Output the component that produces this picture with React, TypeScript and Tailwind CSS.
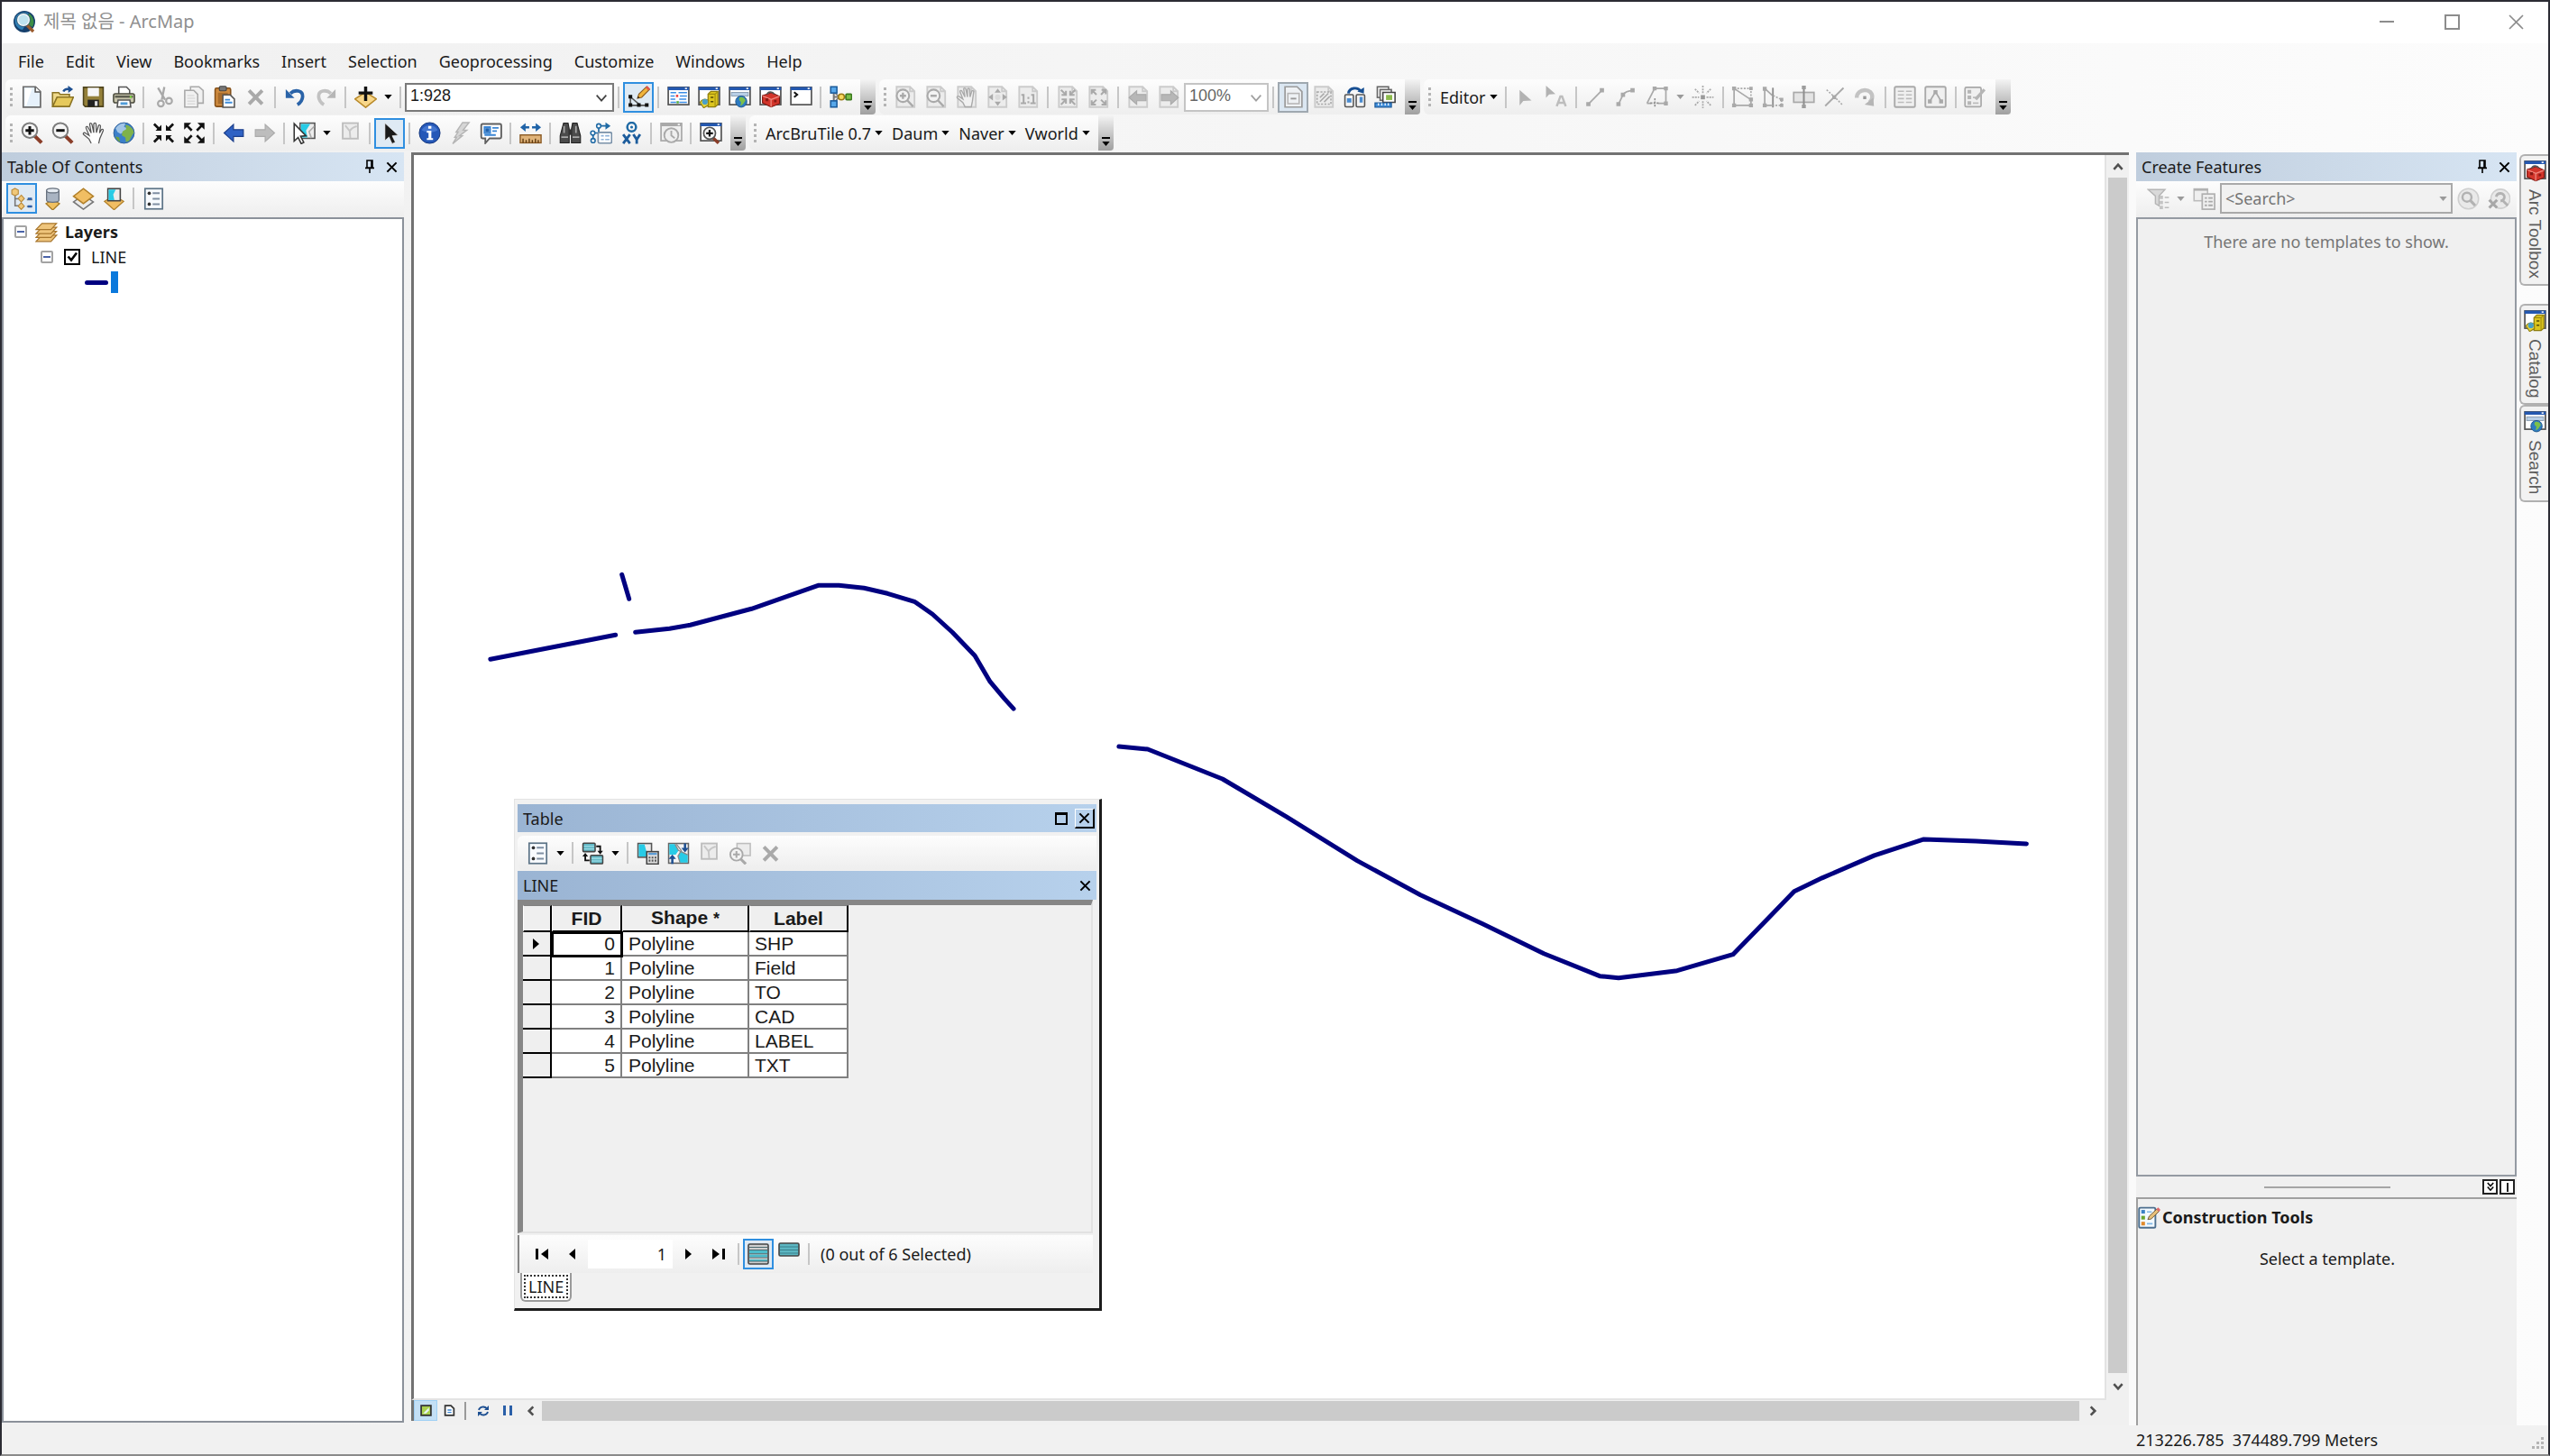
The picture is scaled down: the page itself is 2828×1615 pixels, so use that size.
import React from "react";

type Kids = { children?: React.ReactNode };

const G = "#a9a9a9";
const GL = "#dcdcdc";
const NAVY = "#1d4f91";

/* ---------- icon primitives, drawn on a 16 unit grid ---------- */

function Svg({ children }: Kids) {
  return (
    <svg viewBox="0 0 16 16" className="h-[25px] w-[25px] shrink-0" fill="none" aria-hidden="true">
      {children}
    </svg>
  );
}

const winFrame = (gray = false) => (
  <>
    <rect x="0.7" y="1.2" width="14.6" height="12.3" fill={gray ? "#efefef" : "#fff"} stroke={gray ? G : "#555"} strokeWidth="1.1" />
    <rect x="0.5" y="1" width="15" height="2.2" fill={gray ? G : "#2458b0"} />
    <rect x="12.6" y="1.5" width="1.4" height="1" fill="#fff" />
  </>
);

const grayPage = (
  <path d="M1.5 .8h9.5l3.2 3.2v11.2H1.5z M11 .8V4h3.2" fill="#ececec" stroke="#cbcbcb" strokeWidth="1.2" />
);

const icons = {
  newDoc: (
    <>
      <path d="M1.8.8h8.7L14 4.3v11H1.8z" fill="#e6f1fb" stroke="#6b6b6b" strokeWidth="1.1" />
      <path d="M3 2h5l-4 12H3z" fill="#fff" />
      <path d="M10.3.9v3.6H14" fill="#fff" stroke="#555" />
    </>
  ),
  open: (
    <>
      <path d="M.8 14.5V5h4.4l1 1.2h6.6v2" fill="#efd98a" stroke="#8b7424" />
      <path d="M.9 14.8 4 8.2h11.6l-2.8 6.6z" fill="#e6c95c" stroke="#8b7424" />
      <path d="M8.5 4.2c.8-1.8 2.2-2 4-1.7" stroke={NAVY} strokeWidth="1.5" />
      <path d="m11.8 0 3.6 2.6-3.4 2.5z" fill={NAVY} />
    </>
  ),
  save: (
    <>
      <path d="M1 1.2h14v13.6H2.2L1 13.6z" fill="#94803a" stroke="#4e431c" />
      <rect x="4" y="1.5" width="8" height="6" fill="#f6f6f6" />
      <rect x="4" y="10" width="8" height="5" fill="#222" />
      <rect x="9" y="11" width="2" height="3.4" fill="#ddd" />
    </>
  ),
  print: (
    <>
      <path d="M4.3 6V1h5.5l2.2 2.2V6" fill="#fff" stroke="#555" />
      <rect x=".6" y="5.8" width="14.8" height="6.4" rx="1.3" fill="#c8c5ac" stroke="#4a4a3c" />
      <rect x="1.6" y="7" width="12.8" height="1.6" fill="#5d5d50" />
      <path d="M3.8 10.2h8.4l.6 4.9H3.2z" fill="#fff" stroke="#555" />
      <rect x="5.5" y="11.8" width="5" height="1.8" fill="#4f9bd8" />
      <circle cx="12.8" cy="8" r=".8" fill="#7be03a" />
    </>
  ),
  cut: (
    <>
      <path d="M4 1.5 9 10M8.5 1l-1.8 9" stroke={G} strokeWidth="1.5" />
      <circle cx="6" cy="12.7" r="2.1" stroke={G} strokeWidth="1.4" />
      <circle cx="11.8" cy="10.8" r="2.1" stroke={G} strokeWidth="1.4" />
    </>
  ),
  copy: (
    <>
      <path d="M5.3.8h6l3 2.6v9H5.3z" fill="#f1f1f1" stroke={G} />
      <path d="M1.2 3.4h6.4l2.8 2.8v9H1.2z" fill="#f1f1f1" stroke={G} />
      <path d="M3 7h5M3 9h5.6M3 11h5.6M3 13h5.6" stroke={GL} />
    </>
  ),
  paste: (
    <>
      <rect x="1" y="1.8" width="11" height="13" rx="1" fill="#cf8b3f" stroke="#855018" />
      <rect x="4" y=".5" width="5" height="3.2" rx=".8" fill="#777" stroke="#444" strokeWidth=".7" />
      <path d="M3 5h7v8H3z" fill="#a86c2c" />
      <path d="M6.5 6.5h5.2l3 3v5.8H6.5z" fill="#fff" stroke="#555" />
      <path d="M8 10h3.6M8 12h5.2" stroke="#3e8ddb" strokeWidth="1.2" />
    </>
  ),
  del: <path d="m3.3 3.5 9.4 9.5M12.7 3.5 3.3 13" stroke={G} strokeWidth="2.5" />,
  undo: (
    <>
      <path d="M4.5 5.5C8 2.3 13.5 3.6 13.2 7.8c-.2 3-2 4.7-3.7 5.7" stroke="#2a63a8" strokeWidth="2.4" />
      <path d="M1.2 2.6v6.2h6.2z" fill="#2a63a8" />
    </>
  ),
  redo: (
    <>
      <path d="M11.5 5.5C8 2.3 2.5 3.6 2.8 7.8c.2 3 2 4.7 3.7 5.7" stroke="#c2c2c2" strokeWidth="2.4" />
      <path d="M14.8 2.6v6.2H8.6z" fill="#b6b6b6" />
    </>
  ),
  addData: (
    <>
      <path d="m8 15.5-7.6-6L8 4.6l7.6 4.9z" fill="#f8d78a" stroke="#b98a2b" />
      <path d="M8 .6v10.2M3 5.2h10" stroke="#111" strokeWidth="2.2" />
    </>
  ),
  sketch: (
    <>
      <path d="M2 8v6h12M2 8l6 5" stroke="#555" />
      <path d="M.7 6.5h2.6v2.6H.7zM.7 12.4h2.6V15H.7zM6.7 12.4h2.6V15H6.7zM12.3 12.4h2.6V15h-2.6z" fill="#111" />
      <path d="m7 9 1-3 5.6-5.4 2 2L10 8.3z" fill="#f0b43c" stroke="#8a5a1e" strokeWidth=".7" />
      <path d="m12.7 1.4 1.3-1.2 2 2-1.3 1.2z" fill="#e0574f" />
      <path d="m7 9 .5-1.5 1 1z" fill="#111" />
    </>
  ),
  toc: (
    <>
      {winFrame()}
      <path d="M2.3 5h4M2.3 7.4h3M2.3 9.6h3.4M2.3 11.8h4M8 5h6M9 7.4h5M8.5 9.6h5M8.5 11.8h5.4" stroke="#3c8ee6" strokeWidth="1" />
      <path d="M6.2 6.5h1.6v1.6H6.2z" fill="#e33" />
      <path d="M6.6 11h1.6v1.6H6.6z" fill="#4aa83a" />
    </>
  ),
  catalog: (
    <>
      {winFrame()}
      <path d="m7.2 6 2-2h5v9.4l-2 1.7h-5z" fill="#dcc51e" stroke="#8d7c0c" strokeWidth=".8" />
      <path d="M7.5 6h4.7v8.7M12.2 6l1.9-1.8" stroke="#a08d10" strokeWidth=".7" />
      <path d="M1.5 12c1-2.4 4-3 6-1.4v3.2l-3.4 2z" fill="#e7d33a" stroke="#8d7c0c" strokeWidth=".7" />
      <circle cx="5" cy="11.5" r="2" fill="#4aa0c8" />
      <path d="M9 8.3h2M9 11.3h2" stroke="#554a05" />
    </>
  ),
  search: (
    <>
      {winFrame()}
      <rect x="2" y="4.8" width="12" height="2.6" fill="#b9cfe6" stroke="#8a9cb0" strokeWidth=".6" />
      <circle cx="9" cy="11.3" r="4" fill="#2d7bc2" stroke="#1c5488" strokeWidth=".6" />
      <path d="M7.8 8.4c1.6-.7 4 .2 4.2 2.2l-1.6 2.4-1.8 1.4c-.4-1.3.8-1.8 0-3-.8-.8-1.6-1.6-.8-3z" fill="#7cc04a" />
    </>
  ),
  toolbox: (
    <>
      {winFrame()}
      <path d="m2.3 7 6.5-2 5.6 2.6v5.2L8.4 15.2l-6.1-3z" fill="#d3352b" stroke="#7e1610" strokeWidth=".7" />
      <path d="M8.5 9.8 2.3 7.2M8.5 9.8l5.9-2.2M8.4 9.8v5.4" stroke="#f08a80" strokeWidth=".8" />
      <path d="M5.6 6.2C6 4.2 9.5 3.8 10.6 6" stroke="#555" strokeWidth="1.1" />
      <path d="M4.5 9h2v2h-2zM10.5 10h1.8v1.8h-1.8z" fill="#8a1a14" />
    </>
  ),
  python: (
    <>
      {winFrame()}
      <path d="m3 4.6 2.2 1.8L3 8.2" stroke="#111" strokeWidth="1.3" />
    </>
  ),
  model: (
    <>
      <path d="M3 3.5v9M3 8h11" stroke="#777" strokeWidth="1.3" />
      <path d="M3 4.5 7 8l-4 4" stroke="#777" />
      <rect x=".8" y=".8" width="4.4" height="4.4" fill="#58a8ea" stroke="#1c5c9c" />
      <rect x=".8" y="10.8" width="4.4" height="4.4" fill="#58a8ea" stroke="#1c5c9c" />
      <circle cx="8.4" cy="8" r="2.1" fill="#f8d860" stroke="#9b7a14" />
      <rect x="11.6" y="6" width="4" height="4" rx=".6" fill="#7cc04a" stroke="#3b7a1e" />
    </>
  ),
  pgZoomIn: (
    <>
      {grayPage}
      <circle cx="6" cy="7.2" r="4.4" fill="#f3f3f3" stroke={G} strokeWidth="1.3" />
      <path d="M6 5v4.4M3.8 7.2h4.4M9.2 10.6l4 4.2" stroke={G} strokeWidth="1.5" />
    </>
  ),
  pgZoomOut: (
    <>
      {grayPage}
      <circle cx="6" cy="7.2" r="4.4" fill="#f3f3f3" stroke={G} strokeWidth="1.3" />
      <path d="M3.8 7.2h4.4M9.2 10.6l4 4.2" stroke={G} strokeWidth="1.5" />
    </>
  ),
  pgPan: (
    <>
      {grayPage}
      <path d="M6.5 15 5 12 1 8.6c-.5-1 .7-1.4 1.5-.8L5 9.5 3 4.4c-.2-1 1-1.3 1.4-.4L6.5 8 5.6 2.4c0-1 1.2-1 1.5 0L8.3 8V2.6c.2-.9 1.4-.9 1.5 0l.3 5.4 1.2-4c.5-.8 1.5-.4 1.4.5L11.8 11 11 15z" fill="#f1f1f1" stroke={G} strokeWidth=".9" />
    </>
  ),
  pgFull: (
    <>
      {grayPage}
      <path d="M8 2 5.8 5h4.4zM8 14.4 5.8 11.4h4.4zM1.4 8.2l3.2-2.4v4.8zM14.6 8.2l-3.2-2.4v4.8z" fill={G} />
      <circle cx="8" cy="8.2" r="2" fill={GL} />
    </>
  ),
  pg11: (
    <>
      {grayPage}
      <path d="M3 6.5h1.6v6M2.6 12.5h3.8M10 6.5h1.6v6M9.4 12.5h3.8M8 8v1.4M8 11v1.4" stroke={G} strokeWidth="1.3" />
    </>
  ),
  pgIn: (
    <>
      {grayPage}
      <path d="m3 3 3 3M6.5 3.6v3H3.4M13 3l-3 3M9.5 3.6v3h3.1M3 13.4l3-3M6.5 12.8v-3H3.4M13 13.4l-3-3M9.5 12.8v-3h3.1" stroke={G} strokeWidth="1.3" />
    </>
  ),
  pgOut: (
    <>
      {grayPage}
      <path d="m3.4 3.4 3 3M3 6V3h3M12.6 3.4l-3 3M13 6V3h-3M3.4 13l3-3M3 10.4v3h3M12.6 13l-3-3M13 10.4v3h-3" stroke={G} strokeWidth="1.3" />
    </>
  ),
  pgBack: (
    <>
      {grayPage}
      <path d="m1.4 8.5 5.4-4.8v2.6h6.6v4.4H6.8v2.6z" fill="#b7b7b7" stroke={G} strokeWidth=".7" />
    </>
  ),
  pgFwd: (
    <>
      {grayPage}
      <path d="M14.6 8.5 9.2 3.7v2.6H2.6v4.4h6.6v2.6z" fill="#b7b7b7" stroke={G} strokeWidth=".7" />
    </>
  ),
  draft: (
    <>
      <path d="M2 .8h8.6L14 4.2v11H2z" fill="#eef1f4" stroke="#9b9b9b" strokeWidth="1.1" />
      <rect x="4" y="5.5" width="8" height="7.3" stroke="#b5b5b5" />
      <path d="M6 9.2h4" stroke="#999" strokeWidth="1.2" />
    </>
  ),
  focus: (
    <>
      {grayPage}
      <rect x="3" y="4.5" width="9.8" height="8.6" stroke={G} strokeDasharray="1.4 1" />
      <path d="m5 11.4 6-6M5 8.5l3-3M8 11.6l4-4" stroke={G} />
    </>
  ),
  changeLayout: (
    <>
      <path d="M3.5 5.5C4 1.5 10 .5 12.2 4" stroke="#174f93" strokeWidth="1.9" />
      <path d="m9.8 4.2 4.6 1.4.2-4.4z" fill="#174f93" />
      <rect x="1" y="6.4" width="6" height="8.6" rx=".8" fill="#f4f4f4" stroke="#555" />
      <rect x="9" y="6.4" width="6" height="8.6" rx=".8" fill="#f4f4f4" stroke="#555" />
      <path d="M2.4 9h3.2v3H2.4zM11.4 8h2.2v4h-2.2z" fill="#4a8bd0" />
    </>
  ),
  dataDriven: (
    <>
      <rect x="2.2" y=".8" width="8" height="7.6" fill="#f2f2f2" stroke="#666" />
      <rect x="4.2" y="2.8" width="8" height="7.6" fill="#f2f2f2" stroke="#666" />
      <path d="M6.2 4.8h8.6v7H6.2z" fill="#fff" stroke="#444" />
      <rect x="8.4" y="6.6" width="4.4" height="3.6" fill="#8cba4c" />
      <path d="M.6 12.2h11.6v3H.6z" fill="#3f8edb" stroke="#1e5b9a" strokeWidth=".8" />
      <path d="M3 12.4v1.6M5.4 12.4v1.6M7.8 12.4v1.6M10 12.4v1.6" stroke="#fff" strokeWidth=".8" />
    </>
  ),
  edArrow: <path d="M4 3v11l2.600-3.200 5.900-.300z" fill="#b2b2b2" />,
  edArrowA: (
    <>
      <path d="M1 0v8.6l2.2-2.4 4.5-.3z" fill="#b2b2b2" />
      <path d="m8.6 14.6 2.6-7h1.2l2.6 7M9.8 12.2h4" stroke="#bdbdbd" strokeWidth="1.6" />
    </>
  ),
  edLine: (
    <>
      <path d="m3 13 9.4-9.6" stroke={G} strokeWidth="1.1" />
      <path d="M1.4 11.6h3v3h-3zM11 1.8h3v3h-3z" fill={G} />
    </>
  ),
  edArc: (
    <>
      <path d="M2.600 13 5.700 6.500C7 4.400 9 3.600 13 3.400" stroke={G} strokeWidth="1.1" />
      <path d="M1 11.6h3v3H1zM4.2 5h3v3h-3zM11 1.8h3v3h-3z" fill={G} />
    </>
  ),
  edTrace: (
    <>
      <path d="M1 12.5 6.4 2h8v10.5H9M1 12.500h3" stroke={G} strokeWidth="1.1" />
      <path d="M5 .6h2.8v2.8H5zM13 .6h2.8v2.8H13zM13 11.2h2.8V14H13z" fill={G} />
      <path d="M6.6 9v6.6M3.4 12.4h6.4" stroke="#8d8d8d" strokeDasharray="1.4 .8" />
    </>
  ),
  edPoint: (
    <>
      <rect x="6.5" y="6.7" width="3" height="3" fill="#9a9a9a" />
      <path d="M8 0v5.4M8 11v5M.4 8.2h5M10.6 8.2h5M2.4 2.4l3 3M13.6 2.4l-3 3M2.4 14l3-3M13.6 14l-3-3" stroke={G} strokeDasharray="1.3 .7" strokeWidth="1.1" />
    </>
  ),
  edVertices: (
    <>
      <path d="M2 2v12h12v-4L2 2" stroke={G} strokeWidth="1.1" />
      <path d="M2 2h12v7" stroke={G} strokeDasharray="1.3 1" />
      <path d="M.6.6h2.8v2.8H.6zM.6 12.6h2.8v2.8H.6zM12.6 12.6h2.8v2.8h-2.8zM12.6 8.4h2.8v2.8h-2.8zM12.8.8h2.4v2.4h-2.4z" fill={G} />
    </>
  ),
  edReshape: (
    <>
      <path d="M2 2v12h5M2 2l5.4 5" stroke={G} strokeWidth="1.1" />
      <path d="M7.8 1.5v14" stroke="#8f8f8f" strokeWidth="1.2" />
      <path d="m8 7 6 3v4H8" stroke={G} strokeDasharray="1.3 1" />
      <path d="M.6.8h2.8v2.8H.6zM.6 12.6h2.8v2.8H.6zM12.8 8.6h2.4V11h-2.4zM12.8 12.8h2.4v2.4h-2.4z" fill={G} />
    </>
  ),
  edCutPoly: (
    <>
      <rect x=".8" y="4.8" width="14.4" height="7" fill="#e4e4e4" stroke={G} strokeWidth="1.1" />
      <path d="M8 1v14" stroke="#8f8f8f" strokeWidth="1.3" />
      <path d="M6.6 0h2.8v2.6H6.6zM6.6 13.4h2.8V16H6.6z" fill="#9d9d9d" />
    </>
  ),
  edSplit: (
    <>
      <path d="M1.4 14.4 14.4 1.6" stroke={G} strokeWidth="1.2" />
      <path d="m2.4 3 5.6 5 6 6" stroke={G} strokeDasharray="1.3 1" />
      <rect x="6.4" y="6.8" width="2.8" height="2.8" fill={G} />
    </>
  ),
  edRotate: (
    <>
      <path d="M2 8.6C2 1.4 13.6 1.4 13 8.4c-.1 1.8-1 2.8-2 3.6" stroke="#c3c3c3" strokeWidth="2.8" />
      <path d="m7.6 13.4 6.6 1.2-.4-6z" fill="#b5b5b5" />
      <rect x="6.6" y="7.4" width="2.2" height="2.2" fill="#9a9a9a" />
    </>
  ),
  edAttr: (
    <>
      <rect x=".8" y=".8" width="14.4" height="14.4" rx="1" fill="#f0f0f0" stroke={G} strokeWidth="1.2" />
      <path d="M3 4h4.4M3 6.6h4.4M3 9.2h4.4M3 11.8h4.4M8.8 4H13M8.8 6.6H13M8.8 9.2H13M8.8 11.8H13" stroke="#bcbcbc" />
    </>
  ),
  edSketchProp: (
    <>
      <rect x=".8" y=".8" width="14.4" height="14.4" rx="1" fill="#f0f0f0" stroke={G} strokeWidth="1.2" />
      <path d="m4 11 4-6.6 4 6.6" stroke={G} strokeWidth="1.1" />
      <path d="M6.6 3.2h2.8V6H6.6zM2.6 9.8h2.8v2.8H2.6zM10.6 9.8h2.8v2.8h-2.8z" fill={G} />
    </>
  ),
  edCreate: (
    <>
      <rect x=".8" y="1.2" width="11.4" height="13.8" rx="1" fill="#f0f0f0" stroke={G} strokeWidth="1.1" />
      <path d="M2.6 3h2.6v2.6H2.6zM2.6 7h2.6v2.6H2.6zM2.6 11h2.6v2.6H2.6z" fill="#b5b5b5" />
      <path d="M6.4 12.4h4M6.4 8.4h2" stroke="#bcbcbc" />
      <path d="m7.4 9 6.4-7 1.6 1.4-6.2 7z" fill="#b5b5b5" />
    </>
  ),
  zoomIn: (
    <>
      <path d="m9.8 10 5 5" stroke="#8a3d28" strokeWidth="2.6" />
      <circle cx="6.4" cy="6.2" r="5.3" fill="#f6f6f6" stroke="#7c7c7c" strokeWidth="1.3" />
      <path d="M6.4 3.2v6M3.4 6.2h6" stroke="#111" strokeWidth="1.9" />
    </>
  ),
  zoomOut: (
    <>
      <path d="m9.8 10 5 5" stroke="#8a3d28" strokeWidth="2.6" />
      <circle cx="6.4" cy="6.2" r="5.3" fill="#f6f6f6" stroke="#7c7c7c" strokeWidth="1.3" />
      <path d="M3.4 6.2h6" stroke="#111" strokeWidth="1.9" />
    </>
  ),
  pan: (
    <path d="M6.5 15.4 5 12.4 1 9c-.6-1 .7-1.5 1.5-.9L5 9.7 2.8 4.4c-.2-1 1-1.3 1.4-.4L6.5 8 5.4 1.9c0-1.1 1.2-1.1 1.6 0L8.3 7.8V1.6c.2-.9 1.4-.9 1.6 0l.3 6.2 1.5-5c.5-.8 1.5-.4 1.4.5L12.4 8l1.4-2.4c.7-.6 1.5 0 1.2.8L12.6 12l-.8 3.4" fill="#fff" stroke="#555" strokeWidth=".8" />
  ),
  globe: (
    <>
      <circle cx="8" cy="8" r="7.3" fill="#3b7fc9" stroke="#2a5b94" strokeWidth=".6" />
      <path d="M2 4.6C4 1.8 6.5.8 9 1.2l-1 2.4 2.6 1L8.3 7.2 5.6 8.6 3.4 7.4z" fill="#e8f3fb" opacity=".6" />
      <path d="M9 2.2c3 .2 5.6 2.6 6 5.4l-1.6 2.6-1.8 3.4-2.2.8-.4-3.2-2.6-1.6.6-2.8 2.6-1.6z" fill="#7fb24a" />
      <path d="m2 10.4 2.6.8.6 3.2C3.6 13.6 2.4 12.2 2 10.4z" fill="#6ea23e" />
    </>
  ),
  fixedIn: (
    <>
      <path d="m1.2 1.600 4 4M14.800 1.600l-4 4M1.200 14.400l4-4M14.800 14.400l-4-4" stroke="#111" strokeWidth="1.7" />
      <path d="M6.4 6.400H2.200l4.200-4.200zM9.600 6.400h4.200L9.600 2.200zM6.400 9.600H2.200l4.200 4.200zM9.600 9.600h4.200l-4.200 4.200z" fill="#111" />
    </>
  ),
  fixedOut: (
    <>
      <path d="m2 2 4.2 4.2M14 2 9.8 6.2M2 14l4.2-4.2M14 14 9.8 9.8" stroke="#111" strokeWidth="1.7" />
      <path d="M.8.8h5L.8 5.6zM15.2.8h-5l5 4.8zM.8 15.2h5l-5-4.8zM15.2 15.2h-5l5-4.8z" fill="#111" />
    </>
  ),
  back: <path d="m1 8 6.6-6v3.6h7v4.8h-7V14z" fill="#2f62c4" stroke="#1c3f8c" strokeWidth=".8" />,
  forward: <path d="M15 8 8.4 2v3.6h-7v4.8h7V14z" fill="#bdbdbd" stroke="#acacac" strokeWidth=".8" />,
  selectFeat: (
    <>
      <rect x="5" y="1" width="10.4" height="10.8" fill="#ececec" stroke="#555" />
      <path d="M5.6 1.6h6.6l-3 4.6 1 5H5.6z" fill="#27cbe6" />
      <path d="M15 3.4 11.4 7l1.6 4.6" stroke="#aaa" />
      <path d="M.8 1.4v12.4l2.8-2.6 2.2 4.4 1.8-1-2.2-4.2 3.8-.4z" fill="#fff" stroke="#333" />
    </>
  ),
  clearSel: (
    <>
      <rect x="2.6" y="1" width="10.800" height="11" fill="#ececec" stroke="#bdbdbd" strokeWidth="1.2" />
      <path d="m4.400 2.600 3.200 4 .4 5M7.600 6.600c1.200-2 2.600-2.800 5-3.400" stroke="#c6c6c6" strokeWidth="1.2" />
    </>
  ),
  pointer: <path d="M4.4 1v12.4l2.9-2.6 2.2 4.8 2.3-1-2.2-4.6 4.2-.4z" fill="#1a1a1a" stroke="#fff" strokeWidth=".4" />,
  info: (
    <>
      <circle cx="8" cy="8" r="7.4" fill="#2558b8" stroke="#16387c" strokeWidth=".6" />
      <path d="M2.4 6C4 1.6 12 1.6 13.6 6 10 8 6 8 2.4 6z" fill="#5a8be0" opacity=".6" />
      <path d="M7 3h2.2v2H7zM6 6.4h3.2v5.2h1.2V13H6v-1.4h1.2V7.8H6z" fill="#fff" />
    </>
  ),
  bolt: <path d="M9.6.6h4.6L10 6h2.6L7.4 10h2L2.6 15.6 5.4 11H4l2.4-3.6H5z" fill="#d6d6d6" stroke="#b5b5b5" strokeWidth=".9" />,
  popup: (
    <>
      <path d="M2 1.6h12.4c.6 0 .9.4.9.9v8.4c0 .5-.4.9-.9.9H7l-3 3.4v-3.4H2c-.6 0-.9-.4-.9-.9V2.5c0-.5.4-.9.9-.9z" fill="#fff" stroke="#5f5f5f" strokeWidth="1.2" />
      <path d="M3.4 3.8h4V8h-4zM9 4.4h4.4M9 6.6h3.2M3.4 9.4h8" stroke="#3b86d4" strokeWidth="1.2" />
      <path d="M4 4.6h2.8v2.8H4z" fill="#1f63b0" />
    </>
  ),
  measure: (
    <>
      <path d="M7 4H3M9 4h4" stroke="#1f63a8" strokeWidth="1.7" />
      <path d="M.6 4 4.4 1v6zM15.4 4 11.6 1v6z" fill="#1f63a8" />
      <rect x=".6" y="9.4" width="14.8" height="5.6" fill="#e0b47a" stroke="#8a5a24" strokeWidth=".9" />
      <path d="M2.6 15v-3M4.8 15v-2M7 15v-3M9.2 15v-2M11.4 15v-3M13.4 15v-2" stroke="#5e3a10" strokeWidth=".9" />
    </>
  ),
  binoc: (
    <>
      <path d="M3.2 1h3.2l.8 4v10H.8V10zM12.8 1H9.6l-.8 4v10h6.4v-5z" fill="#4b4b4b" stroke="#222" strokeWidth=".7" />
      <path d="M7 5.4h2v4H7z" fill="#333" />
      <path d="M1.6 11h4.8M9.6 11h4.8M3.6 3v5M12 3v5" stroke="#a8a8a8" strokeWidth="1.1" />
    </>
  ),
  route: (
    <>
      <path d="M2.4 13V8h4V3h6" stroke="#1f6aa5" strokeWidth="1.1" />
      <path d="m11.2.4 3.6 2.6-3.6 2.6z" fill="#1f6aa5" />
      <circle cx="6.4" cy="3" r="1.5" fill="#fff" stroke="#1f6aa5" />
      <circle cx="2.2" cy="8" r="1.5" fill="#fff" stroke="#1f6aa5" />
      <circle cx="2.4" cy="13.4" r="1.5" fill="#fff" stroke="#1f6aa5" />
      <rect x="6" y="7.6" width="9.6" height="7.6" rx="1" fill="#fff" stroke="#7890a8" strokeWidth="1.1" />
      <path d="M8 10h2M11 10h3M8 12.6h2M11 12.6h3" stroke="#8fb3d9" />
    </>
  ),
  goXY: (
    <>
      <circle cx="8" cy="3.8" r="3.1" stroke="#1f6aa5" strokeWidth="1.6" />
      <circle cx="8" cy="3.8" r="1" fill="#1f6aa5" />
      <path d="m2 9 4.8 6.4M6.8 9 2 15.4M9.2 9l2.4 3.6v3M14 9l-2.4 3.6" stroke="#1c5c9c" strokeWidth="1.8" />
    </>
  ),
  time: (
    <>
      {winFrame(true)}
      <circle cx="8" cy="9.6" r="5" fill="#efefef" stroke={G} strokeWidth="1.2" />
      <path d="M8 6.4v3.4l2.4 1.8" stroke={G} strokeWidth="1.2" />
    </>
  ),
  viewer: (
    <>
      {winFrame()}
      <path d="m9 11 4.4 4.2" stroke="#8a3d28" strokeWidth="2.2" />
      <circle cx="7" cy="8.2" r="4.2" fill="#f6f6f6" stroke="#555" strokeWidth="1.1" />
      <path d="M7 5.8v4.8M4.6 8.2h4.8" stroke="#111" strokeWidth="1.4" />
    </>
  ),
  listOrder: (
    <>
      <path d="M3 5v8h4M3 8h3M11.4 8.6h3.8M11.4 13.4h3.8" stroke="#777" />
      <path d="m3 .6 2.3 1.2v2.8L3 5.8.7 4.6V1.8zM7.4 5.4l2.2 2.4-2.2 2.4-2.2-2.4zM7.4 10.8l2.2 2.4-2.2 2.4-2.2-2.4z" fill="#f1c878" stroke="#b98a3b" strokeWidth=".7" />
      <path d="M12 8h3M12 13.4h3" stroke="#2c5fa8" strokeWidth="1.6" />
    </>
  ),
  listSource: (
    <>
      <path d="m8 16-4.8-4.6L8 8.6l4.8 2.8z" fill="#f0c060" stroke="#a67a25" strokeWidth=".8" />
      <path d="M3.6 2v7c0 2 8.8 2 8.8 0V2z" fill="#a9b4c2" stroke="#67717e" strokeWidth=".8" />
      <ellipse cx="8" cy="2.2" rx="4.4" ry="1.6" fill="#e5ebf1" stroke="#67717e" strokeWidth=".8" />
    </>
  ),
  listVisible: (
    <>
      <path d="m8 15.4-7-5.2L8 5.4l7 4.8z" fill="#ececec" stroke="#777" />
      <path d="M8 11.4 1 6.2 8 .8l7 5.4z" fill="#f1be63" stroke="#b1802a" />
    </>
  ),
  listSel: (
    <>
      <path d="m8 15.8-6.8-6L8 5.8l6.8 4z" fill="#f1be63" stroke="#b1802a" strokeWidth=".8" />
      <rect x="3.6" y=".8" width="8.8" height="8.6" fill="#ececec" stroke="#444" />
      <path d="M4.2 1.4h5L7.4 5l.8 4h-4z" fill="#27cbe6" />
    </>
  ),
  options: (
    <>
      <rect x="1.8" y=".8" width="12.4" height="14.4" fill="#f8fbff" stroke="#5d7487" strokeWidth="1.1" />
      <circle cx="4.8" cy="4" r="1.2" fill="#333" />
      <circle cx="4.8" cy="11.8" r="1.2" fill="#333" />
      <path d="M7.2 4h5M7.2 8h5M7.2 11.8h5" stroke="#7f8fa2" strokeWidth="1.2" />
    </>
  ),
  layers: (
    <>
      {[9, 6.2, 3.4, 0.6].map((y) => (
        <path key={y} d={`M.6 ${y + 5.6}h10.6l4-4.4H4.8z`} fill="#efc57c" stroke="#a8762c" strokeWidth=".8" />
      ))}
    </>
  ),
  related: (
    <>
      <rect x="1" y=".8" width="8.6" height="6" rx=".6" fill="#63b9c6" stroke="#444" />
      <rect x="6.4" y="9.4" width="8.6" height="6" rx=".6" fill="#63b9c6" stroke="#444" />
      <path d="M1.6 3h7.4M1.6 5h7.4M7 11.6h7.4M7 13.4h7.4" stroke="#a8e2ea" strokeWidth=".7" />
      <path d="M10.4 3h2.8v4M5.6 13H2.6V9.4" stroke="#111" strokeWidth="1.2" />
      <path d="M11.2 6.2h4l-2 2.6zM.6 10.2h4l-2-2.6z" fill="#111" />
    </>
  ),
  selAttr: (
    <>
      <rect x="1" y="1" width="9.6" height="9.8" fill="#ececec" stroke="#555" />
      <path d="M1.6 1.6h4L6.8 6l3.2 4.2H1.6z" fill="#27cbe6" />
      <rect x="7.2" y="6.8" width="8.2" height="8.8" fill="#ddd" stroke="#444" />
      <path d="M8.4 8.4h6" stroke="#5b9bd5" strokeWidth="1.4" />
      <path d="M8.6 11h5.6M8.6 13.2h5.6" stroke="#555" strokeDasharray="1.2 .9" strokeWidth="1.3" />
    </>
  ),
  switchSel: (
    <>
      <rect x="1" y="1" width="14" height="14" fill="#f4f4f4" stroke="#666" />
      <path d="M1.500 1.500h4L8 6l-2 3H1.500zM10 6.400l4.500 2.600v5.500H9L7.600 10z" fill="#27cbe6" />
      <path d="M5.500 1.500 8 6l6.500 3M6.500 1.500 10 6l-2.400 4L9 14.500" stroke="#888" strokeWidth=".8" />
      <path d="M12.6 1v4M3.6 15.500v-4" stroke={NAVY} strokeWidth="1.6" />
      <path d="M10 4.200h5.2l-2.6 3.2zM1 12h5.2L3.6 8.800z" fill={NAVY} />
    </>
  ),
  zoomSel: (
    <>
      <rect x="6" y="1" width="9.4" height="8.6" fill="#ececec" stroke="#bdbdbd" />
      <path d="m8.6 12 3.6 3.6" stroke={G} strokeWidth="2" />
      <circle cx="5.6" cy="8.8" r="4.4" fill="#f3f3f3" stroke={G} strokeWidth="1.2" />
      <path d="M5.6 6.4v4.8M3.2 8.8H8" stroke={G} strokeWidth="1.3" />
    </>
  ),
  filterTree: (
    <>
      <path d="M.8 1.4h12L8.6 6v7L6 11.4V6z" fill="#d9d9d9" stroke="#b5b5b5" strokeWidth=".9" />
      <path d="M9 5.8h2.4v2.4H9zM9 9.4h2.4v2.4H9zM9 13h2.4v2.4H9z" fill="#c4c4c4" />
      <path d="M12.6 7h3M12.6 10.6h3M12.6 14.2h3" stroke="#bcbcbc" />
    </>
  ),
  organize: (
    <>
      <rect x=".8" y="1" width="9.6" height="8.4" fill="#efefef" stroke="#bcbcbc" />
      <path d="M.6 1.6h10" stroke="#b0b0b0" strokeWidth="1.4" />
      <rect x="6.6" y="4.6" width="8.8" height="10.8" fill="#efefef" stroke="#b0b0b0" strokeWidth="1.1" />
      <path d="M8.4 7.4h1.6M8.4 10h1.6M8.4 12.6h1.6M11 7.4h3M11 10h3M11 12.6h3" stroke={G} strokeWidth="1.2" />
    </>
  ),
  searchGo: (
    <>
      <circle cx="8" cy="8" r="7.2" fill="#e9e9e9" stroke="#cfcfcf" />
      <circle cx="7" cy="6.8" r="3.2" stroke="#b2b2b2" strokeWidth="1.6" />
      <path d="m9.4 9.2 3.4 3.6" stroke="#b2b2b2" strokeWidth="2" />
    </>
  ),
  searchClear: (
    <>
      <circle cx="9" cy="8" r="6.8" fill="#e9e9e9" stroke="#cfcfcf" />
      <path d="M6 6.6c.6-3.4 6-3.2 5.8.4-.2 1.6-1.4 2.4-2.8 2.6M10.8 9.4l3.4 3.4" stroke="#b2b2b2" strokeWidth="1.8" />
      <path d="m1 8.8 5.6 5.6M6.6 8.8 1 14.4" stroke="#a8a8a8" strokeWidth="2" />
    </>
  ),
  construct: (
    <>
      <rect x=".8" y="1" width="11.6" height="14.2" rx="1" fill="#f4faff" stroke="#4d6f8e" strokeWidth="1.2" />
      <path d="M2.4 2.6H5v2.6H2.4z" fill="#3b82c4" />
      <path d="M2.4 6.8H5v2.6H2.4z" fill="#6aa52e" />
      <path d="M2.4 11H5v2.6H2.4z" fill="#e08a2c" />
      <path d="M6.4 4h3.4M6.4 12.4h4" stroke="#7fb6e4" strokeWidth="1.1" />
      <path d="m7 9.4 1-2.4 5.4-5 1.6 1.6L9.4 9z" fill="#e8c07a" stroke="#6a5434" strokeWidth=".6" />
      <path d="m13 2 1.4-1.2L16 2.6l-1.2 1.2z" fill="#e0676a" />
    </>
  ),
};

type IconName = keyof typeof icons;

/* ---------- toolbar pieces ---------- */

function Tool({ icon, label, state }: { icon: IconName; label: string; state?: "on" | "dim" }) {
  const look =
    state === "on"
      ? "border-2 border-[#2f8fe0] bg-[#dfeaf4]"
      : state === "dim"
        ? "border-2 border-[#9fa8b0] bg-[#dbe7f2]"
        : "";
  return (
    <button type="button" aria-label={label} title={label} className={`flex h-[34px] w-[34px] shrink-0 items-center justify-center ${look}`}>
      <Svg>{icons[icon]}</Svg>
    </button>
  );
}

const Sep = () => (
  <span className="flex h-6 w-[10px] shrink-0 items-center justify-center">
    <span className="h-6 w-[2px] bg-[#c6c6c6]" />
  </span>
);

function Tri({ gray }: { gray?: boolean }) {
  return (
    <svg viewBox="0 0 10 6" className="h-[5px] w-[9px] shrink-0" aria-hidden="true">
      <path d="M0 0h10L5 6z" fill={gray ? "#9a9a9a" : "#000"} />
    </svg>
  );
}

function Caret({ label, gray }: { label: string; gray?: boolean }) {
  return (
    <button type="button" aria-label={label} className="flex h-[34px] w-[17px] shrink-0 items-center justify-center">
      <Tri gray={gray} />
    </button>
  );
}

const Grip = () => (
  <span className="flex h-full w-3 shrink-0 flex-col items-center justify-center gap-[3px]">
    {[0, 1, 2, 3].map((i) => (
      <span key={i} className="size-[3px] bg-[#b4b4b4]" />
    ))}
  </span>
);

function Bar({ children, name }: Kids & { name: string }) {
  return (
    <div role="toolbar" aria-label={name} className="flex h-[39px] shrink-0 items-center rounded-l-md bg-linear-to-b from-[#fdfdfd] to-[#eeeeee]">
      <Grip />
      {children}
      <button type="button" aria-label={`${name} options`} className="ml-[5px] flex w-[17px] flex-col items-center justify-end gap-[3px] self-stretch rounded-br-sm bg-linear-to-b from-[#f4f4f4] to-[#a0a0a0] pb-[5px]">
        <span className="h-[2px] w-[9px] bg-black" />
        <Tri />
      </button>
    </div>
  );
}

function TextMenu({ label }: { label: string }) {
  return (
    <button type="button" className="flex h-[34px] shrink-0 items-center gap-1 pr-1 pl-[6px] whitespace-nowrap">
      {label}
      <Tri />
    </button>
  );
}

function Chevron({ dir, className }: { dir: "up" | "down" | "left" | "right"; className?: string }) {
  const d = { up: "M2 8.5 6 4l4 4.5", down: "M2 3.5 6 8l4-4.5", left: "M8 2 4 6l4 4", right: "M4 2l4 4-4 4" }[dir];
  return (
    <svg viewBox="0 0 12 12" className={className ?? "h-[14px] w-[14px]"} fill="none" aria-hidden="true">
      <path d={d} stroke="currentColor" strokeWidth={className ? 1.3 : 2.2} />
    </svg>
  );
}

const Pin = () => (
  <svg viewBox="0 0 12 16" className="h-4 w-3" fill="none" aria-hidden="true">
    <path d="M3 1h6v8H3zM1 9.4h10M6 10v5M8 1v8" stroke="#000" strokeWidth="1.6" />
  </svg>
);
const Cross = () => (
  <svg viewBox="0 0 14 14" className="h-[13px] w-[13px]" fill="none" aria-hidden="true">
    <path d="m1.5 1.5 11 11M12.5 1.5l-11 11" stroke="#000" strokeWidth="2.2" />
  </svg>
);

function PanelHeader({ title }: { title: string }) {
  return (
    <header className="flex h-8 shrink-0 items-center bg-linear-to-r from-[#bfcddd] to-[#d7e5f3] pr-[7px] pl-[6px]">
      <h2 className="flex-1">{title}</h2>
      <button type="button" aria-label={`Auto hide ${title}`} className="mr-3"><Pin /></button>
      <button type="button" aria-label={`Close ${title}`}><Cross /></button>
    </header>
  );
}

const Expander = ({ label }: { label: string }) => (
  <button type="button" aria-label={label} className="flex size-[14px] items-center justify-center rounded-[2px] border-2 border-[#a3a3a3] bg-white">
    <span className="h-[2px] w-2 bg-[#4a63a8]" />
  </button>
);

/* ---------- page regions ---------- */

function TitleBar() {
  return (
    <div className="flex h-[46px] shrink-0 items-center bg-white pb-[2px] pl-3">
      <svg viewBox="0 0 26 26" className="h-[26px] w-[26px]" fill="none" aria-hidden="true">
        <circle cx="13" cy="13" r="12" fill="#16406c" />
        <path d="M3 9c2-6 10-8 15-5l-4 4 2 6-5 8C5 21 1 15 3 9z" fill="#2f7fb5" />
        <path d="M18 4c5 3 7 9 4 15l-5-3-1-6z" fill="#3c8f46" />
        <path d="m15 16 8 8" stroke="#9a5a2c" strokeWidth="3.4" />
        <circle cx="12" cy="11" r="6.4" fill="#bfe3ee" stroke="#eef4f6" strokeWidth="1.8" />
        <circle cx="12" cy="11" r="7.5" stroke="#31566e" strokeWidth=".8" />
      </svg>
      <h1 className="ml-2 flex-1 text-[20px] text-[#8f8f8f]">제목 없음 - ArcMap</h1>
      <div className="flex items-center gap-[54px] pr-[27px] text-[#8c8c8c]">
        <button type="button" aria-label="Minimize" className="flex h-6 w-[18px] items-center"><span className="h-[2px] w-4 bg-[#8c8c8c]" /></button>
        <button type="button" aria-label="Maximize" className="size-[17px] border-2 border-[#8c8c8c]" />
        <button type="button" aria-label="Close">
          <svg viewBox="0 0 17 17" className="h-[17px] w-[17px]" aria-hidden="true">
            <path d="M1 1l15 15M16 1L1 16" stroke="currentColor" strokeWidth="1.6" />
          </svg>
        </button>
      </div>
    </div>
  );
}

const menus = ["File", "Edit", "View", "Bookmarks", "Insert", "Selection", "Geoprocessing", "Customize", "Windows", "Help"];

function MenuBar() {
  return (
    <nav aria-label="Main menu" className="flex h-10 shrink-0 items-center pl-[6px]">
      {menus.map((m) => (
        <button key={m} type="button" className="h-8 px-3">{m}</button>
      ))}
    </nav>
  );
}

function Toolbars() {
  return (
    <div className="flex shrink-0 flex-col pb-[1px] pl-1">
      <div className="flex h-10 items-start gap-1">
        <Bar name="Standard">
          <Tool icon="newDoc" label="New" />
          <Tool icon="open" label="Open" />
          <Tool icon="save" label="Save" />
          <Tool icon="print" label="Print" />
          <Sep />
          <Tool icon="cut" label="Cut" />
          <Tool icon="copy" label="Copy" />
          <Tool icon="paste" label="Paste" />
          <Tool icon="del" label="Delete" />
          <Sep />
          <Tool icon="undo" label="Undo" />
          <Tool icon="redo" label="Redo" />
          <Sep />
          <Tool icon="addData" label="Add Data" />
          <Caret label="Add Data options" />
          <Sep />
          <div className="relative h-8 w-[232px]">
            <select aria-label="Map scale" className="h-full w-full appearance-none border-2 border-[#7a7a7a] bg-white pb-1 pl-1 font-['Liberation_Sans',sans-serif] text-[18px] leading-[22px]">
              <option>1:928</option>
            </select>
            <Chevron dir="down" className="pointer-events-none absolute top-[9px] right-[6px] h-4 w-4 text-[#444]" />
          </div>
          <Sep />
          <Tool icon="sketch" label="Editor Toolbar" state="on" />
          <Sep />
          <Tool icon="toc" label="Table Of Contents" />
          <Tool icon="catalog" label="Catalog" />
          <Tool icon="search" label="Search" />
          <Tool icon="toolbox" label="ArcToolbox" />
          <Tool icon="python" label="Python" />
          <Sep />
          <Tool icon="model" label="ModelBuilder" />
        </Bar>
        <Bar name="Layout">
          <Tool icon="pgZoomIn" label="Layout Zoom In" />
          <Tool icon="pgZoomOut" label="Layout Zoom Out" />
          <Tool icon="pgPan" label="Layout Pan" />
          <Tool icon="pgFull" label="Zoom Whole Page" />
          <Tool icon="pg11" label="Zoom to 100%" />
          <Sep />
          <Tool icon="pgIn" label="Layout Fixed Zoom In" />
          <Tool icon="pgOut" label="Layout Fixed Zoom Out" />
          <Sep />
          <Tool icon="pgBack" label="Layout Back" />
          <Tool icon="pgFwd" label="Layout Forward" />
          <div className="relative h-8 w-[94px]">
            <select aria-label="Layout zoom" className="h-full w-full appearance-none border-2 border-[#c4c4c4] bg-white pb-1 pl-1 font-['Liberation_Sans',sans-serif] text-[18px] leading-[22px] text-[#666]">
              <option>100%</option>
            </select>
            <Chevron dir="down" className="pointer-events-none absolute top-[9px] right-[6px] h-4 w-4 text-[#a0a0a0]" />
          </div>
          <Sep />
          <Tool icon="draft" label="Draft Mode" state="dim" />
          <Tool icon="focus" label="Focus Data Frame" />
          <Tool icon="changeLayout" label="Change Layout" />
          <Tool icon="dataDriven" label="Data Driven Pages" />
        </Bar>
        <Bar name="Editor">
          <TextMenu label="Editor" />
          <Sep />
          <Tool icon="edArrow" label="Edit Tool" />
          <Tool icon="edArrowA" label="Edit Annotation" />
          <Sep />
          <Tool icon="edLine" label="Straight Segment" />
          <Tool icon="edArc" label="End Point Arc" />
          <Tool icon="edTrace" label="Trace" />
          <Caret label="Trace options" gray />
          <Tool icon="edPoint" label="Point" />
          <Sep />
          <Tool icon="edVertices" label="Edit Vertices" />
          <Tool icon="edReshape" label="Reshape" />
          <Tool icon="edCutPoly" label="Cut Polygons" />
          <Tool icon="edSplit" label="Split" />
          <Tool icon="edRotate" label="Rotate" />
          <Sep />
          <Tool icon="edAttr" label="Attributes" />
          <Tool icon="edSketchProp" label="Sketch Properties" />
          <Sep />
          <Tool icon="edCreate" label="Create Features" />
        </Bar>
      </div>
      <div className="flex h-10 items-start gap-1">
        <Bar name="Tools">
          <Tool icon="zoomIn" label="Zoom In" />
          <Tool icon="zoomOut" label="Zoom Out" />
          <Tool icon="pan" label="Pan" />
          <Tool icon="globe" label="Full Extent" />
          <Sep />
          <Tool icon="fixedIn" label="Fixed Zoom In" />
          <Tool icon="fixedOut" label="Fixed Zoom Out" />
          <Sep />
          <Tool icon="back" label="Previous Extent" />
          <Tool icon="forward" label="Next Extent" />
          <Sep />
          <Tool icon="selectFeat" label="Select Features" />
          <Caret label="Select options" />
          <Tool icon="clearSel" label="Clear Selected Features" />
          <Sep />
          <Tool icon="pointer" label="Select Elements" state="on" />
          <Sep />
          <Tool icon="info" label="Identify" />
          <Tool icon="bolt" label="Hyperlink" />
          <Tool icon="popup" label="HTML Popup" />
          <Sep />
          <Tool icon="measure" label="Measure" />
          <Sep />
          <Tool icon="binoc" label="Find" />
          <Tool icon="route" label="Find Route" />
          <Tool icon="goXY" label="Go To XY" />
          <Sep />
          <Tool icon="time" label="Time Slider" />
          <Sep />
          <Tool icon="viewer" label="Viewer Window" />
        </Bar>
        <Bar name="ArcBruTile">
          <TextMenu label="ArcBruTile 0.7" />
          <TextMenu label="Daum" />
          <TextMenu label="Naver" />
          <TextMenu label="Vworld" />
        </Bar>
      </div>
    </div>
  );
}

function Contents() {
  return (
    <aside className="flex w-[446px] shrink-0 flex-col pb-[3px]">
      <PanelHeader title="Table Of Contents" />
      <div className="flex h-10 items-center bg-linear-to-b from-[#fdfdfd] to-[#eeeeee] pb-[2px] pl-[5px]">
        <Tool icon="listOrder" label="List By Drawing Order" state="on" />
        <Tool icon="listSource" label="List By Source" />
        <Tool icon="listVisible" label="List By Visibility" />
        <Tool icon="listSel" label="List By Selection" />
        <Sep />
        <Tool icon="options" label="Options" />
      </div>
      <ul className="flex-1 border-2 border-[#8b919a] bg-white pl-3">
        <li>
          <div className="flex h-7 items-center">
            <Expander label="Collapse Layers" />
            <span className="ml-[9px]"><Svg>{icons.layers}</Svg></span>
            <b className="ml-2">Layers</b>
          </div>
          <ul>
            <li>
              <div className="flex h-7 items-center pl-[29px]">
                <Expander label="Collapse LINE" />
                <label className="flex items-center">
                  <span className="relative ml-3 flex size-[18px]">
                    <input type="checkbox" defaultChecked className="size-[18px] appearance-none border-2 border-black bg-white" />
                    <svg viewBox="0 0 18 18" className="pointer-events-none absolute inset-0" fill="none" aria-hidden="true">
                      <path d="m4.5 8.5 3.5 4 6-8" stroke="#000" strokeWidth="2.6" />
                    </svg>
                  </span>
                  <span className="ml-3">LINE</span>
                </label>
              </div>
              <div className="flex h-7 items-center gap-[3px] pl-[78px]">
                <span className="h-[5px] w-[26px] rounded-full bg-[#000080]" />
                <span className="h-6 w-2 bg-[#0b79dc]" />
              </div>
            </li>
          </ul>
        </li>
      </ul>
    </aside>
  );
}

const lines = [
  "543,732 682,705",
  "689,638 697,665",
  "704,702 742,698 765,694 833,676 907,650 930,650 958,653 984,659 1014,668 1034,682 1056,702 1081,728 1098,757 1114,776 1124,787",
  "1241,829 1273,832 1356,865 1427,907 1506,956 1576,994 1645,1026 1713,1059 1775,1084 1796,1086 1861,1078 1923,1060 1961,1021 1991,990 2022,975 2080,950 2135,932 2193,934 2249,937",
];

const rows = ["SHP", "Field", "TO", "CAD", "LABEL", "TXT"];

const barBlue = "bg-linear-to-r from-[#9ab4d3] to-[#b7d1ec]";

function NavBtn({ label, d }: { label: string; d: string }) {
  return (
    <button type="button" aria-label={label} className="flex h-[34px] w-[34px] items-center justify-center">
      <svg viewBox="0 0 16 12" className="h-3 w-4" aria-hidden="true"><path d={d} fill="#000" /></svg>
    </button>
  );
}

function TableWindow() {
  const th = "border-t border-l border-t-[#808080] border-l-white border-r-2 border-b-2 border-r-black border-b-black bg-[#efefef] p-0 font-bold";
  const td = "border-r-2 border-b-2 border-[#808080] bg-white p-0";
  return (
    <section aria-label="Table" className="absolute top-[714px] left-[114px] flex h-[568px] w-[652px] flex-col border-r-[3px] border-b-[3px] border-[#1c1c1c] border-t border-l border-t-[#e3e3e3] border-l-[#e3e3e3] bg-[#f1f1f1] pt-[5px] pr-[3px] pb-[2px] pl-[3px]">
      <header className={`flex h-[31px] shrink-0 items-center pr-[2px] pl-[6px] ${barBlue}`}>
        <h2 className="flex-1">Table</h2>
        <button type="button" aria-label="Maximize table" className="mr-2 size-[14px] border-2 border-t-[3px] border-black" />
        <button type="button" aria-label="Close table" className="flex size-[22px] items-center justify-center border-r-2 border-b-2 border-t border-l border-t-white border-l-white border-black"><Cross /></button>
      </header>
      <div className="mt-1 flex h-[38px] shrink-0 items-center rounded-l-md bg-linear-to-b from-[#fdfdfd] to-[#eeeeee] pl-[5px]">
        <Tool icon="options" label="Table options" />
        <Caret label="More table options" />
        <Sep />
        <Tool icon="related" label="Related tables" />
        <Caret label="More related tables" />
        <Sep />
        <Tool icon="selAttr" label="Select by attributes" />
        <Tool icon="switchSel" label="Switch selection" />
        <Tool icon="clearSel" label="Clear selection" />
        <Tool icon="zoomSel" label="Zoom to selected" />
        <Tool icon="del" label="Delete selected" />
      </div>
      <header className={`mt-[1px] flex h-8 shrink-0 items-center pr-[6px] pl-[6px] ${barBlue}`}>
        <h3 className="flex-1">LINE</h3>
        <button type="button" aria-label="Close LINE"><Cross /></button>
      </header>
      <div className="mr-1 flex-1 border-t-[6px] border-l-[6px] border-r-2 border-b-2 border-t-[#868686] border-l-[#868686] border-r-[#e2e2e2] border-b-[#e2e2e2] bg-[#f0f0f0]">
        <table className="border-separate border-spacing-0 font-['Liberation_Sans',sans-serif] text-[21px] leading-[25px]">
          <thead>
            <tr>
              <th className={`w-8 ${th}`} aria-label="Row" />
              <th className={`w-[78px] ${th}`}>FID</th>
              <th className={`w-[141px] ${th}`}>Shape <span className="text-[18px]">*</span></th>
              <th className={`w-[110px] ${th}`}>Label</th>
            </tr>
          </thead>
          <tbody>
            {rows.map((label, i) => (
              <tr key={label}>
                <td className="border-r-2 border-b-2 border-black bg-[#efefef] p-0">
                  {i === 0 && (
                    <svg viewBox="0 0 8 12" className="mx-auto h-3 w-2" aria-hidden="true"><path d="M0 0 7 6 0 12z" /></svg>
                  )}
                </td>
                <td className={`${td} pr-[6px] text-right ${i === 0 ? "outline-[3px] -outline-offset-2 outline-black" : ""}`}>{i}</td>
                <td className={`${td} pl-[7px]`}>Polyline</td>
                <td className={`${td} pl-[6px]`}>{label}</td>
              </tr>
            ))}
          </tbody>
        </table>
      </div>
      <div className="mt-[2px] mr-1 flex h-[42px] shrink-0 items-center border-l-2 border-[#868686] bg-linear-to-b from-[#fdfdfd] to-[#eeeeee] pl-2">
        <NavBtn label="First record" d="M1 0h3v12H1zM15 0v12L7 6z" />
        <NavBtn label="Previous record" d="M11 0v12L4 6z" />
        <input aria-label="Record" defaultValue="1" className="h-8 w-[94px] bg-white pr-[7px] text-right" />
        <NavBtn label="Next record" d="M5 0v12l7-6z" />
        <NavBtn label="Last record" d="M12 0h3v12h-3zM1 0v12l8-6z" />
        <Sep />
        <button type="button" aria-label="Show all records" className="flex h-[34px] w-[34px] items-center justify-center border-2 border-[#2f8fe0] bg-[#dfeaf4]">
          <svg viewBox="0 0 24 24" className="h-6 w-6" aria-hidden="true">
            <rect x="1" y="1" width="22" height="22" rx="1.5" fill="#cfcfcf" stroke="#444" strokeWidth="1.6" />
            <path d="M2 8h20v3H2zM2 12.5h20v3H2zM2 18h20v2H2z" fill="#4dbccb" />
            <path d="M2 4.5h20M2 7.5h20M2 11.7h20M2 16h20M2 20h20" stroke="#4b6a70" />
          </svg>
        </button>
        <button type="button" aria-label="Show selected records" className="flex h-[34px] w-[34px] items-start justify-center pt-1">
          <svg viewBox="0 0 24 16" className="h-4 w-6" aria-hidden="true">
            <rect x="1" y="1" width="22" height="14" rx="1.5" fill="#5cb6c2" stroke="#444" strokeWidth="1.6" />
            <path d="M2 5h20M2 8.5h20M2 12h20" stroke="#39808c" />
          </svg>
        </button>
        <Sep />
        <output className="ml-2">(0 out of 6 Selected)</output>
      </div>
      <div role="tablist" className="flex h-[37px] shrink-0 items-start pl-[3px]">
        <button type="button" role="tab" aria-selected="true" className="flex h-8 items-center rounded-b-md border-r-2 border-b-2 border-l-2 border-[#9a9a9a] bg-white px-[2px]">
          <span className="border-2 border-dotted border-[#333] px-[3px] leading-[22px]">LINE</span>
        </button>
      </div>
    </section>
  );
}

function MapView() {
  return (
    <main className="relative mx-2 flex min-w-0 flex-1 flex-col border-t-[3px] border-[#727272]">
      <div className="flex min-h-0 flex-1">
        <div className="min-w-0 flex-1 overflow-hidden border-r-2 border-b-2 border-l-[3px] border-r-[#e3e3e3] border-b-[#e3e3e3] border-l-[#727272] bg-white">
          <svg viewBox="458 172 1876 1381" preserveAspectRatio="xMinYMin meet" className="h-full w-full" fill="none" role="img" aria-label="Map lines">
            {lines.map((p) => (
              <polyline key={p} points={p} stroke="#000080" strokeWidth="5" strokeLinecap="round" strokeLinejoin="round" />
            ))}
          </svg>
        </div>
        <div className="flex w-[25px] shrink-0 flex-col items-center bg-[#f0f0f0] text-[#505050]">
          <button type="button" aria-label="Scroll up" className="flex h-[25px] w-full items-center justify-center"><Chevron dir="up" /></button>
          <div className="w-[21px] flex-1 bg-[#cbcbcb]" />
          <button type="button" aria-label="Scroll down" className="flex h-[30px] w-full items-center justify-center"><Chevron dir="down" /></button>
        </div>
      </div>
      <div className="flex h-[23px] shrink-0 items-center border-l-[3px] border-[#727272] bg-[#f0f0f0] text-[#505050]">
        <button type="button" aria-label="Data View" className="flex h-[23px] w-[26px] items-center justify-center border border-[#9fd0f5] bg-[#c3dff5]">
          <svg viewBox="0 0 12 12" className="h-[13px] w-[13px]" aria-hidden="true"><rect x="1" y="1" width="10" height="10" fill="#a9cf4e" stroke="#333" strokeWidth="1.6" /><path d="m3 9 6-6v3L6 9z" fill="#e8f4f8" /></svg>
        </button>
        <button type="button" aria-label="Layout View" className="flex h-[23px] w-[26px] items-center justify-center">
          <svg viewBox="0 0 12 12" className="h-[13px] w-[13px]" fill="none" aria-hidden="true"><path d="M1.5 1h6l3 3v7h-9z" fill="#fff" stroke="#333" strokeWidth="1.6" /><path d="M4 5.5h4M4 8h4" stroke="#3b86d4" strokeWidth="1.3" /></svg>
        </button>
        <span className="mx-1 h-5 w-[2px] bg-[#9a9a9a]" />
        <button type="button" aria-label="Refresh" className="ml-[2px] flex w-[26px] items-center justify-center">
          <svg viewBox="0 0 14 14" className="h-[14px] w-[14px]" fill="none" aria-hidden="true"><path d="M2 6c.8-3.4 6-5 9-1.6M12 8c-.8 3.4-6 5-9 1.6" stroke={NAVY} strokeWidth="1.8" /><path d="M13 1v5H8zM1 13V8h5z" fill={NAVY} /></svg>
        </button>
        <button type="button" aria-label="Pause drawing" className="flex w-7 items-center justify-center gap-1">
          <span className="h-[11px] w-[3px] bg-[#2a5fa8]" />
          <span className="h-[11px] w-[3px] bg-[#2a5fa8]" />
        </button>
        <button type="button" aria-label="Scroll left" className="flex w-6 items-center justify-center"><Chevron dir="left" /></button>
        <div className="h-[22px] flex-1 bg-[#cbcbcb]" />
        <button type="button" aria-label="Scroll right" className="mr-[25px] flex w-[30px] items-center justify-center"><Chevron dir="right" /></button>
      </div>
      <div className="h-[5px] shrink-0 bg-[#f0f0f0]" />
      <TableWindow />
    </main>
  );
}

function CreateFeatures() {
  return (
    <aside className="flex w-[422px] shrink-0 flex-col">
      <PanelHeader title="Create Features" />
      <div className="flex h-10 items-center bg-linear-to-b from-[#fdfdfd] to-[#eeeeee] pr-[3px] pb-[2px] pl-[7px]">
        <Tool icon="filterTree" label="Filter templates" />
        <Caret label="Filter options" gray />
        <Tool icon="organize" label="Organize templates" />
        <div className="ml-[1px] flex h-[34px] min-w-0 flex-1 items-center border-2 border-[#a9a9a9] bg-[#f1f1f1]">
          <input aria-label="Search templates" placeholder="<Search>" className="min-w-0 flex-1 bg-transparent pl-1 placeholder:text-[#757575]" />
          <Caret label="Search history" gray />
        </div>
        <Tool icon="searchGo" label="Search" />
        <Tool icon="searchClear" label="Clear search" />
      </div>
      <div className="flex-1 border-2 border-[#949aa2] bg-[#f0f0f0] pt-[13px] text-center text-[#757575]">There are no templates to show.</div>
      <div className="flex h-[23px] shrink-0 items-center justify-end bg-[#f0f0f0]">
        <span className="mr-[102px] h-[2px] w-[140px] bg-[#a5a5a5]" />
        <button type="button" aria-label="Collapse pane" className="flex size-[17px] items-center justify-center border-2 border-[#222] bg-white">
          <svg viewBox="0 0 10 12" className="h-[11px] w-[10px]" fill="none" aria-hidden="true"><path d="m1.5 1 3.5 4 3.5-4M1.5 6 5 10l3.5-4" stroke="#000" strokeWidth="1.7" /></svg>
        </button>
        <button type="button" aria-label="Hide pane" className="mr-[2px] ml-[2px] flex size-[17px] items-center justify-center border-2 border-[#222] bg-white">
          <span className="h-[10px] w-[2px] bg-[#222]" />
        </button>
      </div>
      <section className="h-[253px] shrink-0 border-t-2 border-l-2 border-[#a0a0a0] bg-[#f0f0f0]">
        <h3 className="flex h-10 items-center font-bold">
          <Svg>{icons.construct}</Svg>
          <span className="ml-[2px]">Construction Tools</span>
        </h3>
        <p className="mt-[14px] text-center">Select a template.</p>
      </section>
    </aside>
  );
}

function SideTab({ icon, label, className }: { icon: IconName; label: string; className?: string }) {
  return (
    <button type="button" className={`flex flex-col items-center gap-2 rounded-l-md border-2 border-r-0 border-[#b0b0b0] bg-[#f2f2f2] pt-1 pb-[6px] ${className ?? ""}`}>
      <Svg>{icons[icon]}</Svg>
      <span className="font-['Liberation_Sans',sans-serif] text-[19px] leading-[20px] text-[#5c5c5c] [writing-mode:vertical-rl]">{label}</span>
    </button>
  );
}

export default function App() {
  return (
    <div className="flex h-screen min-h-[1100px] flex-col overflow-hidden border-2 border-[#2b2b33] border-b-[#8a8a8a] bg-linear-to-r from-[#f0f0f0] to-[#fcfcfc] font-['Noto_Sans','Noto_Sans_CJK_KR',sans-serif] text-[18px] leading-[24px] text-[#1a1a1a]">
      <TitleBar />
      <MenuBar />
      <Toolbars />
      <div className="flex min-h-0 flex-1">
        <Contents />
        <MapView />
        <CreateFeatures />
        <nav aria-label="Docked windows" className="ml-[3px] flex w-8 shrink-0 flex-col pt-[2px]">
          <SideTab icon="toolbox" label="Arc Toolbox" />
          <SideTab icon="catalog" label="Catalog" className="mt-5" />
          <SideTab icon="search" label="Search" />
        </nav>
      </div>
      <footer className="flex h-8 shrink-0 items-center justify-end bg-[#f1f1f1]">
        <span className="w-[417px] whitespace-pre">213226.785  374489.799 Meters</span>
        <svg viewBox="0 0 14 14" className="mt-2 mr-1 ml-[22px] h-[14px] w-[14px]" fill="#b4b4b4" aria-hidden="true">
          <path d="M10 0h3v3h-3zM5 5h3v3H5zM10 5h3v3h-3zM0 10h3v3H0zM5 10h3v3H5zM10 10h3v3h-3z" />
        </svg>
      </footer>
    </div>
  );
}
